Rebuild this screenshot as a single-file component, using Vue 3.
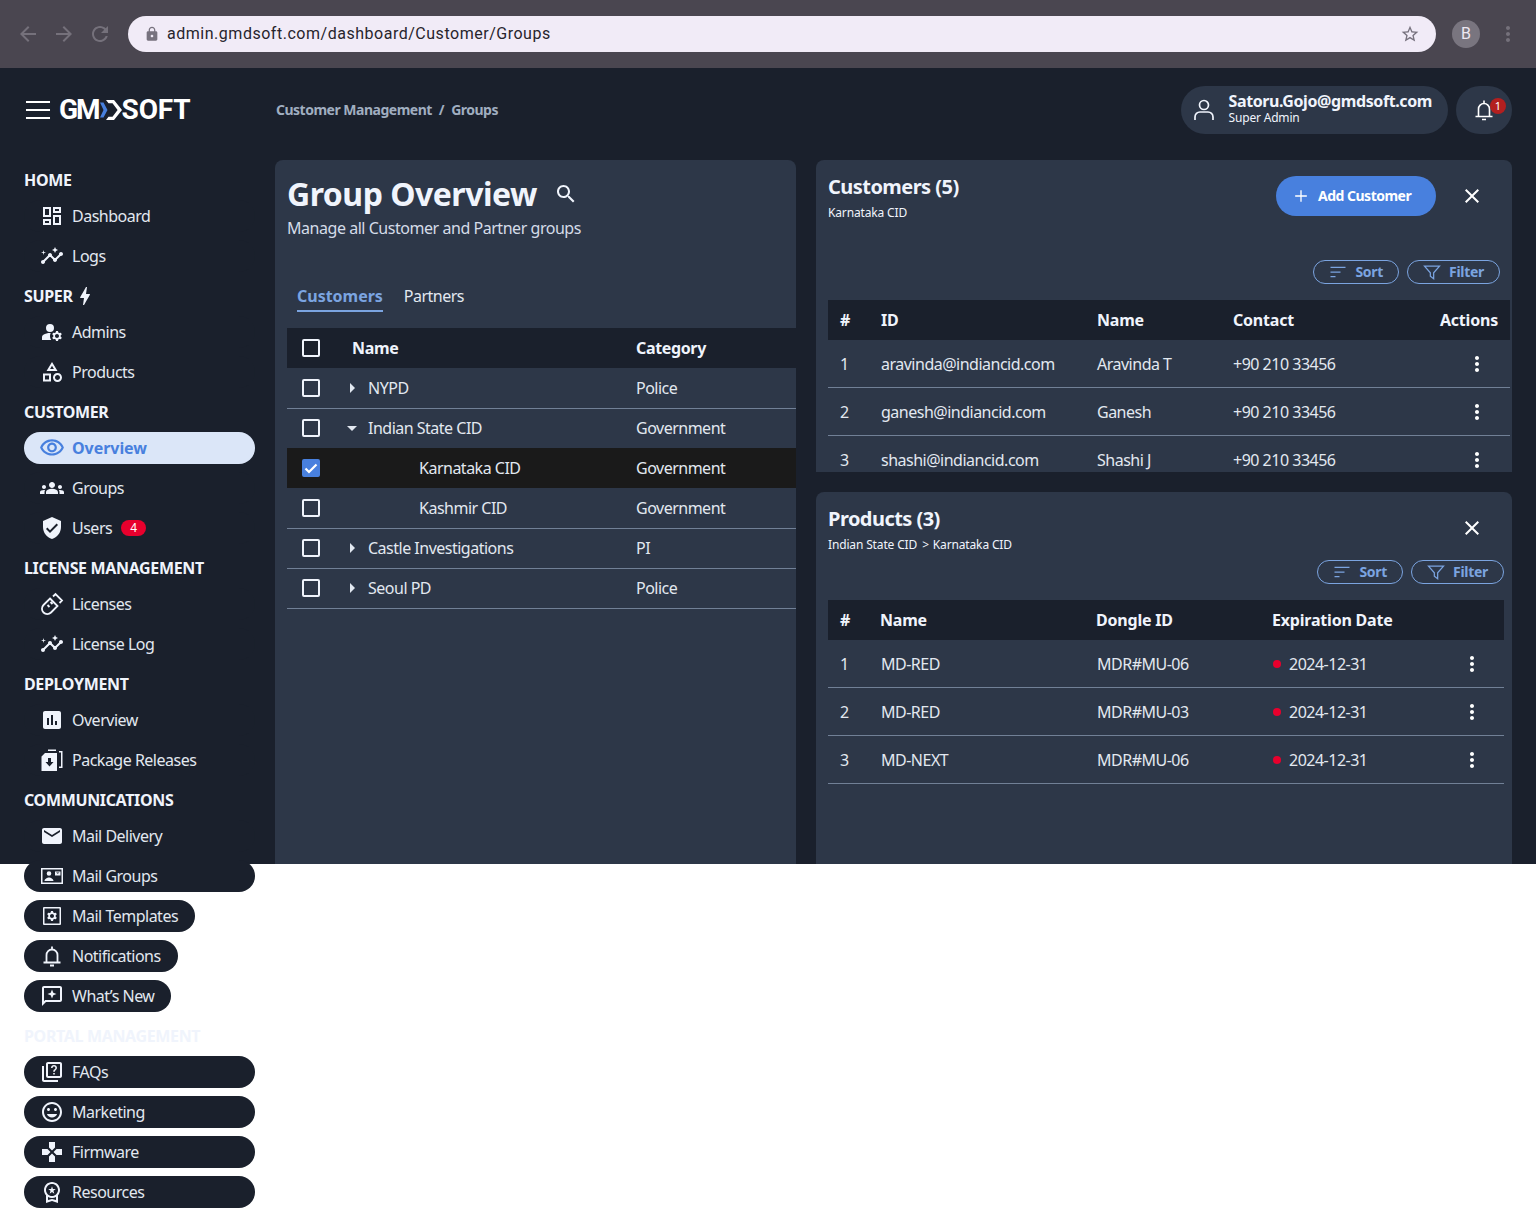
<script setup>
import { h } from 'vue'

const icons = {
  back: 'M20 11H7.83l5.59-5.59L12 4l-8 8 8 8 1.41-1.41L7.83 13H20v-2z',
  forward: 'M12 4l-1.41 1.41L16.17 11H4v2h12.17l-5.58 5.59L12 20l8-8z',
  reload: 'M17.65 6.35C16.2 4.9 14.21 4 12 4c-4.42 0-7.99 3.58-7.99 8s3.57 8 7.99 8c3.73 0 6.84-2.55 7.73-6h-2.08c-.82 2.33-3.04 4-5.65 4-3.31 0-6-2.69-6-6s2.69-6 6-6c1.66 0 3.14.69 4.22 1.78L13 11h7V4l-2.35 2.35z',
  lock: 'M18 8h-1V6c0-2.76-2.24-5-5-5S7 3.24 7 6v2H6c-1.1 0-2 .9-2 2v10c0 1.1.9 2 2 2h12c1.1 0 2-.9 2-2V10c0-1.1-.9-2-2-2zm-6 9c-1.1 0-2-.9-2-2s.9-2 2-2 2 .9 2 2-.9 2-2 2zm3.1-9H8.9V6c0-1.71 1.39-3.1 3.1-3.1 1.71 0 3.1 1.39 3.1 3.1v2z',
  star: 'M22 9.24l-7.19-.62L12 2 9.19 8.63 2 9.24l5.46 4.73L5.82 21 12 17.27 18.18 21l-1.63-7.03L22 9.24zM12 15.4l-3.76 2.27 1-4.28-3.32-2.88 4.38-.38L12 6.1l1.71 4.04 4.38.38-3.32 2.88 1 4.28L12 15.4z',
  dashboard: 'M19 5v2h-4V5h4M9 5v6H5V5h4m10 8v6h-4v-6h4M9 17v2H5v-2h4M21 3h-8v6h8V3zM11 3H3v10h8V3zm10 8h-8v10h8V11zm-10 4H3v6h8v-6z',
  insights: 'M21 8c-1.45 0-2.26 1.44-1.93 2.51l-3.55 3.56c-.3-.09-.74-.09-1.04 0l-2.55-2.55C12.27 10.45 11.46 9 10 9c-1.45 0-2.27 1.44-1.93 2.52l-4.56 4.55C2.44 15.74 1 16.55 1 18c0 1.1.9 2 2 2 1.45 0 2.26-1.44 1.93-2.51l4.55-4.56c.3.09.74.09 1.04 0l2.55 2.55C12.73 16.55 13.54 18 15 18c1.45 0 2.27-1.44 1.93-2.52l3.56-3.55c1.07.33 2.51-.48 2.51-1.93 0-1.1-.9-2-2-2zM15 9l.94-2.07L18 6l-2.06-.93L15 3l-.92 2.07L12 6l2.08.93zM3.5 11L4 9l2-.5L4 8l-.5-2L3 8l-2 .5L3 9z',
  admins: 'M10 4a4 4 0 1 0 0 8 4 4 0 0 0 0-8zM10.67 13.02C10.45 13.01 10.23 13 10 13c-2.42 0-4.68.67-6.61 1.82-.88.52-1.39 1.5-1.39 2.53V20h9.26c-.79-1.13-1.26-2.51-1.26-4 0-1.07.25-2.07.67-2.98zM20.75 16c0-.22-.03-.42-.06-.63l1.14-1.01-1-1.73-1.45.49c-.32-.27-.68-.48-1.08-.63L18 11h-2l-.3 1.49c-.4.15-.76.36-1.08.63l-1.45-.49-1 1.73 1.14 1.01c-.03.21-.06.41-.06.63s.03.42.06.63l-1.14 1.01 1 1.73 1.45-.49c.32.27.68.48 1.08.63L16 21h2l.3-1.49c.4-.15.76-.36 1.08-.63l1.45.49 1-1.73-1.14-1.01c.03-.21.06-.41.06-.63zM17 18c-1.1 0-2-.9-2-2s.9-2 2-2 2 .9 2 2-.9 2-2 2z',
  category: 'M12 2l-5.5 9h11L12 2zm0 3.84L13.93 9h-3.87L12 5.84zM17.5 13c-2.49 0-4.5 2.01-4.5 4.5s2.01 4.5 4.5 4.5 4.5-2.01 4.5-4.5-2.01-4.5-4.5-4.5zm0 7c-1.38 0-2.5-1.12-2.5-2.5s1.12-2.5 2.5-2.5 2.5 1.12 2.5 2.5-1.12 2.5-2.5 2.5zM3 21.5h8v-8H3v8zm2-6h4v4H5v-4z',
  eye: 'M12 6c3.79 0 7.17 2.13 8.82 5.5C19.17 14.87 15.79 17 12 17s-7.17-2.13-8.82-5.5C4.83 8.13 8.21 6 12 6m0-2C7 4 2.73 7.11 1 11.5 2.73 15.89 7 19 12 19s9.27-3.11 11-7.5C21.27 7.11 17 4 12 4zm0 5c1.38 0 2.5 1.12 2.5 2.5S13.38 14 12 14s-2.5-1.12-2.5-2.5S10.62 9 12 9m0-2c-2.48 0-4.5 2.02-4.5 4.5S9.52 16 12 16s4.5-2.02 4.5-4.5S14.48 7 12 7z',
  groups: 'M12 12.75c1.63 0 3.07.39 4.24.9 1.08.48 1.76 1.56 1.76 2.73V18H6v-1.61c0-1.18.68-2.26 1.76-2.73 1.17-.52 2.61-.91 4.24-.91zM4 13c1.1 0 2-.9 2-2s-.9-2-2-2-2 .9-2 2 .9 2 2 2zm1.13 1.1c-.37-.06-.74-.1-1.13-.1-.99 0-1.93.21-2.78.58C.48 14.9 0 15.62 0 16.43V18h4.5v-1.61c0-.83.23-1.61.63-2.29zM20 13c1.1 0 2-.9 2-2s-.9-2-2-2-2 .9-2 2 .9 2 2 2zm4 3.43c0-.81-.48-1.53-1.22-1.85-.85-.37-1.79-.58-2.78-.58-.39 0-.76.04-1.13.1.4.68.63 1.46.63 2.29V18H24v-1.57zM12 6c1.66 0 3 1.34 3 3s-1.34 3-3 3-3-1.34-3-3 1.34-3 3-3z',
  shield: 'M12 1L3 5v6c0 5.55 3.84 10.74 9 12 5.16-1.26 9-6.45 9-12V5l-9-4zm-2 16l-4-4 1.41-1.41L10 14.17l6.59-6.59L18 9l-8 8z',
  poll: 'M19 3H5c-1.1 0-2 .9-2 2v14c0 1.1.9 2 2 2h14c1.1 0 2-.9 2-2V5c0-1.1-.9-2-2-2zM9 17H7v-7h2v7zm4 0h-2V7h2v10zm4 0h-2v-4h2v4z',
  packageFile: 'M1.500 8.500l3.500-3.500h12v18H1.500zM8 10v4H5.500l4 4.500 4-4.500H11v-4zM19 3h3.500v17H19v-1.500h2V4.500h-2zM8 1.500h8V3H8z',
  email: 'M20 4H4c-1.1 0-1.99.9-1.99 2L2 18c0 1.1.9 2 2 2h16c1.1 0 2-.9 2-2V6c0-1.1-.9-2-2-2zm0 4l-8 5-8-5V6l8 5 8-5v2z',
  mailGroup: 'M1 4h22v16H1zM2.500 5.500v13h19v-13zM9 7.200a2.300 2.300 0 1 1 0 4.600 2.300 2.300 0 0 1 0-4.600zM4.500 17c0-2.200 3-3.500 4.500-3.500s4.500 1.300 4.500 3.500zM15 7.500h5.500v4H15zM16 8.500l1.700 1.200 1.800-1.200z',
  mailTemplate: 'M4 3h16a1 1 0 0 1 1 1v16a1 1 0 0 1-1 1H4a1 1 0 0 1-1-1V4a1 1 0 0 1 1-1zM4.500 4.500v15h15v-15zM15.750 12c0-.22-.03-.42-.06-.63l1.140-1.010-1-1.730-1.450.49c-.32-.27-.68-.48-1.080-.63L13 7h-2l-.3 1.490c-.4.15-.76.36-1.080.63l-1.450-.49-1 1.730 1.140 1.010c-.03.21-.06.41-.06.63s.03.42.06.63l-1.140 1.010 1 1.730 1.450-.49c.32.27.68.48 1.080.63L11 17h2l.3-1.490c.4-.15.76-.36 1.080-.63l1.450.49 1-1.730-1.140-1.010c.03-.21.06-.41.06-.63zM12 14c-1.100 0-2-.9-2-2s.9-2 2-2 2 .9 2 2-.9 2-2 2z',
  whatsNew: 'M20 2H4c-1.1 0-2 .9-2 2v18l4-4h14c1.1 0 2-.9 2-2V4c0-1.1-.9-2-2-2zm0 14H5.170L4 17.170V4h16v12zM12 5.500l1.300 3.200 3.200 1.300-3.200 1.300-1.300 3.200-1.300-3.200L7.500 10l3.200-1.300z',
  quiz: 'M4 6H2v14c0 1.1.9 2 2 2h14v-2H4V6zm16-4H8c-1.1 0-2 .9-2 2v12c0 1.1.9 2 2 2h12c1.1 0 2-.9 2-2V4c0-1.1-.9-2-2-2zm0 14H8V4h12v12zM13.200 13h1.600v1.600h-1.600zM14 5c-1.700 0-3 1.300-3 3h1.600c0-.8.6-1.400 1.400-1.400s1.400.6 1.400 1.400c0 1.400-2.200 1.300-2.200 3.700h1.600c0-1.700 2.200-1.900 2.200-3.700 0-1.700-1.300-3-3-3z',
  mood: 'M11.99 2C6.47 2 2 6.48 2 12s4.47 10 9.99 10C17.52 22 22 17.52 22 12S17.52 2 11.99 2zM12 20c-4.42 0-8-3.58-8-8s3.58-8 8-8 8 3.58 8 8-3.58 8-8 8zm3.5-9c.83 0 1.5-.67 1.5-1.5S16.33 8 15.5 8 14 8.67 14 9.5s.67 1.5 1.5 1.5zm-7 0c.83 0 1.5-.67 1.5-1.5S9.33 8 8.5 8 7 8.67 7 9.5 7.67 11 8.5 11zm3.5 6.5c2.33 0 4.31-1.46 5.11-3.5H6.89c.8 2.04 2.78 3.5 5.11 3.5z',
  games: 'M15 7.5V2H9v5.5l3 3 3-3zM7.5 9H2v6h5.5l3-3-3-3zM9 16.5V22h6v-5.5l-3-3-3 3zM16.5 9l-3 3 3 3H22V9h-5.5z',
  premium: 'M9.68 13.69L12 11.93l2.31 1.76-.88-2.85L15.75 9h-2.84L12 6.19 11.09 9H8.25l2.31 1.84-.88 2.85zM20 10c0-4.42-3.58-8-8-8s-8 3.58-8 8c0 2.03.76 3.87 2 5.28V23l6-2 6 2v-7.72c1.24-1.41 2-3.25 2-5.28zm-8-6c3.31 0 6 2.69 6 6s-2.69 6-6 6-6-2.69-6-6 2.69-6 6-6zm0 15l-4 1.02v-3.1c1.18.68 2.54 1.08 4 1.08s2.82-.4 4-1.08v3.1L12 19z',
  bolt: 'M11 21h-1l1-7H7.5c-.58 0-.57-.32-.38-.66.19-.34.05-.08.07-.12C8.48 10.94 10.42 7.54 13 3h1l-1 7h3.5c.49 0 .56.33.47.51l-.07.15C12.96 17.55 11 21 11 21z',
  search: 'M15.5 14h-.79l-.28-.27C15.41 12.59 16 11.11 16 9.5 16 5.91 13.09 3 9.5 3S3 5.91 3 9.5 5.91 16 9.5 16c1.61 0 3.09-.59 4.23-1.57l.27.28v.79l5 4.99L20.49 19l-4.99-5zm-6 0C7.01 14 5 11.99 5 9.5S7.01 5 9.5 5 14 7.01 14 9.5 11.99 14 9.5 14z',
  close: 'M19 6.41L17.59 5 12 10.59 6.41 5 5 6.41 10.59 12 5 17.59 6.41 19 12 13.41 17.59 19 19 17.59 13.41 12z',
  kebab: 'M12 8c1.1 0 2-.9 2-2s-.9-2-2-2-2 .9-2 2 .9 2 2 2zm0 2c-1.1 0-2 .9-2 2s.9 2 2 2 2-.9 2-2-.9-2-2-2zm0 6c-1.1 0-2 .9-2 2s.9 2 2 2 2-.9 2-2-.9-2-2-2z',
  caretRight: 'M10 17l5-5-5-5v10z',
  caretDown: 'M7 10l5 5 5-5H7z',
  menu: 'M1.700 4.300h20.600V6H1.700zM1.700 11.150h20.600v1.700H1.700zM1.700 18h20.600v1.700H1.700z',
  plus: 'M11.2 5h1.6v6.2H19v1.6h-6.2V19h-1.6v-6.2H5v-1.6h6.2z',
}

// outlined icons that read better as strokes than as filled shapes
const strokeIcons = {
  license: 'M10 6.5l7.5 7.5-6.5 6.5A5.3 5.3 0 0 1 3.5 13zM13 4.5L15.500 2 22 8.500 19.500 11M7.500 13l2 2M10.500 10l2 2',
  person: 'M12 2.500a4.500 4.500 0 1 0 0 9 4.500 4.500 0 0 0 0-9zM3 22v-3a5 5 0 0 1 5-5h8a5 5 0 0 1 5 5v3',
  bell: 'M6.500 18v-7a5.500 5.500 0 0 1 11 0v7M3.500 18.500h17M12 2.500v3M10 21.500h4',
  sort: 'M3 6.5h18M3 12h12M3 17.5h6',
  filter: 'M3 5h18l-7 8v7l-4-3v-4z',
}

const Icon = (props) => {
  const stroke = strokeIcons[props.name]
  return h('svg', { viewBox: '0 0 24 24', width: props.size || 24, height: props.size || 24, class: 'icon' }, [
    stroke
      ? h('path', { d: stroke, fill: 'none', stroke: 'currentColor', 'stroke-width': props.weight || 1.8 })
      : h('path', { d: icons[props.name], fill: 'currentColor', 'fill-rule': 'evenodd' }),
  ])
}
Icon.props = ['name', 'size', 'weight']

const nav = [
  { title: 'Home', items: [
    { label: 'Dashboard', icon: 'dashboard' },
    { label: 'Logs', icon: 'insights' },
  ] },
  { title: 'Super', bolt: true, items: [
    { label: 'Admins', icon: 'admins' },
    { label: 'Products', icon: 'category' },
  ] },
  { title: 'Customer', items: [
    { label: 'Overview', icon: 'eye', active: true },
    { label: 'Groups', icon: 'groups' },
    { label: 'Users', icon: 'shield', badge: 4 },
  ] },
  { title: 'License Management', items: [
    { label: 'Licenses', icon: 'license' },
    { label: 'License Log', icon: 'insights' },
  ] },
  { title: 'Deployment', items: [
    { label: 'Overview', icon: 'poll' },
    { label: 'Package Releases', icon: 'packageFile' },
  ] },
  { title: 'Communications', items: [
    { label: 'Mail Delivery', icon: 'email' },
    { label: 'Mail Groups', icon: 'mailGroup' },
    { label: 'Mail Templates', icon: 'mailTemplate', fit: true },
    { label: 'Notifications', icon: 'bell', fit: true },
    { label: 'What’s New', icon: 'whatsNew', fit: true },
  ] },
  { title: 'Portal Management', items: [
    { label: 'FAQs', icon: 'quiz' },
    { label: 'Marketing', icon: 'mood' },
    { label: 'Firmware', icon: 'games' },
    { label: 'Resources', icon: 'premium' },
  ] },
]

const groups = [
  { name: 'NYPD', category: 'Police', caret: 'caretRight', line: true },
  { name: 'Indian State CID', category: 'Government', caret: 'caretDown' },
  { name: 'Karnataka CID', category: 'Government', child: true, checked: true },
  { name: 'Kashmir CID', category: 'Government', child: true, line: true },
  { name: 'Castle Investigations', category: 'PI', caret: 'caretRight', line: true },
  { name: 'Seoul PD', category: 'Police', caret: 'caretRight', line: true },
]

const customers = [
  { id: 'aravinda@indiancid.com', name: 'Aravinda T', contact: '+90 210 33456' },
  { id: 'ganesh@indiancid.com', name: 'Ganesh', contact: '+90 210 33456' },
  { id: 'shashi@indiancid.com', name: 'Shashi J', contact: '+90 210 33456' },
]

const products = [
  { name: 'MD-RED', dongle: 'MDR#MU-06', date: '2024-12-31' },
  { name: 'MD-RED', dongle: 'MDR#MU-03', date: '2024-12-31' },
  { name: 'MD-NEXT', dongle: 'MDR#MU-06', date: '2024-12-31' },
]
</script>

<template>
  <div class="page">
    <div class="chrome">
      <div class="chrome__nav">
        <Icon name="back" />
        <Icon name="forward" />
        <Icon name="reload" />
      </div>
      <div class="omnibox">
        <Icon name="lock" :size="16" class="omnibox__lock" />
        <span class="omnibox__url">admin.gmdsoft.com/dashboard/Customer/Groups</span>
        <Icon name="star" :size="20" class="omnibox__star" />
      </div>
      <span class="avatar">B</span>
      <Icon name="kebab" class="chrome__more" />
    </div>

    <div class="app">
      <header class="topbar">
        <div class="brand">
          <Icon name="menu" :size="28" class="brand__menu" />
          <span class="brand__text brand__text--gm">GM</span>
          <svg class="brand__mark" viewBox="0 0 22 20" width="22" height="20">
            <path d="M0 2.500h3.500l4 7.500-4 7.500H0l3.500-7.500z" fill="#4880de" />
            <path d="M6 0h8l8 10-8 10H6l2.500-3.200h4L17.600 10l-5.100-6.800h-4z" fill="#fff" />
          </svg>
          <span class="brand__text">SOFT</span>
        </div>
        <div class="crumbs">
          <span>Customer Management</span>
          <span>/</span>
          <span>Groups</span>
        </div>
        <div class="account">
          <Icon name="person" :size="24" :weight="1.7" />
          <div class="account__text">
            <strong>Satoru.Gojo@gmdsoft.com</strong>
            <span>Super Admin</span>
          </div>
        </div>
        <div class="alerts">
          <Icon name="bell" :weight="1.6" />
          <span class="alerts__badge">1</span>
        </div>
      </header>

      <div class="workspace">
        <aside class="sidebar">
          <section v-for="section in nav" :key="section.title" class="nav-section">
            <h3 class="nav-section__title">
              {{ section.title }}
              <Icon v-if="section.bolt" name="bolt" class="nav-section__bolt" />
            </h3>
            <a
              v-for="item in section.items"
              :key="item.label"
              class="nav-item"
              :class="{ 'nav-item--active': item.active, 'nav-item--fit': item.fit }"
            >
              <Icon :name="item.icon" :size="item.active ? 26 : 24" />
              <span>{{ item.label }}</span>
              <span v-if="item.badge" class="nav-item__badge">{{ item.badge }}</span>
            </a>
          </section>
        </aside>

        <section class="panel panel--groups">
          <div class="groups-title">
            <h1>Group Overview</h1>
            <Icon name="search" />
          </div>
          <p class="groups-sub">Manage all Customer and Partner groups</p>

          <div class="tabs">
            <span class="tab tab--active">Customers</span>
            <span class="tab">Partners</span>
          </div>

          <div class="tree-row tree-row--head">
            <span class="check" />
            <span>Name</span>
            <span>Category</span>
          </div>
          <div
            v-for="group in groups"
            :key="group.name"
            class="tree-row"
            :class="{ 'tree-row--selected': group.checked, 'tree-row--line': group.line }"
          >
            <span class="check" :class="{ 'check--on': group.checked }">
              <svg v-if="group.checked" viewBox="0 0 18 18" width="18" height="18">
                <path d="M3.500 9.500l3.500 3.500 7.500-7.500" fill="none" stroke="#fff" stroke-width="2.200" />
              </svg>
            </span>
            <span class="tree-name" :class="{ 'tree-name--child': group.child }">
              <Icon v-if="group.caret" :name="group.caret" class="tree-caret" />
              {{ group.name }}
            </span>
            <span>{{ group.category }}</span>
          </div>
        </section>

        <div class="details">
          <section class="panel panel--customers">
            <div class="panel-head">
              <div>
                <h2>Customers (5)</h2>
                <p>Karnataka CID</p>
              </div>
              <div class="panel-head__actions">
                <button class="add-btn">
                  <Icon name="plus" :size="20" />
                  Add Customer
                </button>
                <Icon name="close" class="panel-head__close" />
              </div>
            </div>
            <div class="toolbar">
              <button class="pill-btn"><Icon name="sort" :size="20" :weight="1.5" />Sort</button>
              <button class="pill-btn"><Icon name="filter" :size="20" :weight="1.5" />Filter</button>
            </div>
            <div class="data-row data-row--customers data-row--head">
              <span>#</span><span>ID</span><span>Name</span><span>Contact</span><span class="actions-head">Actions</span>
            </div>
            <div v-for="(row, i) in customers" :key="row.id" class="data-row data-row--customers">
              <span>{{ i + 1 }}</span>
              <span>{{ row.id }}</span>
              <span>{{ row.name }}</span>
              <span>{{ row.contact }}</span>
              <Icon name="kebab" class="row-more" />
            </div>
          </section>

          <section class="panel panel--products">
            <div class="panel-head">
              <div>
                <h2>Products (3)</h2>
                <p>Indian State CID<span class="path-sep">&gt;</span>Karnataka CID</p>
              </div>
              <div class="panel-head__actions">
                <Icon name="close" class="panel-head__close" />
              </div>
            </div>
            <div class="toolbar">
              <button class="pill-btn"><Icon name="sort" :size="20" :weight="1.5" />Sort</button>
              <button class="pill-btn"><Icon name="filter" :size="20" :weight="1.5" />Filter</button>
            </div>
            <div class="data-row data-row--products data-row--head">
              <span>#</span><span>Name</span><span>Dongle ID</span><span>Expiration Date</span><span />
            </div>
            <div v-for="(row, i) in products" :key="i" class="data-row data-row--products">
              <span>{{ i + 1 }}</span>
              <span>{{ row.name }}</span>
              <span>{{ row.dongle }}</span>
              <span class="expiry"><i class="expiry__dot" />{{ row.date }}</span>
              <Icon name="kebab" class="row-more" />
            </div>
          </section>
        </div>
      </div>
    </div>
  </div>
</template>

<style scoped>
.page {
  min-height: 1208px;
  font-family: "Noto Sans", sans-serif;
  font-size: 16px;
  line-height: 24px;
  letter-spacing: -0.5px;
  color: #e2e8f0;
}

.icon {
  display: block;
  flex: none;
}

/* browser bar */
.chrome {
  display: flex;
  align-items: center;
  height: 68px;
  padding: 0 16px;
  box-sizing: border-box;
  background: #4a4650;
  color: #75717b;
}

.chrome__nav {
  display: flex;
  gap: 12px;
  width: 112px;
}

.omnibox {
  display: flex;
  align-items: center;
  width: 1308px;
  height: 36px;
  padding: 0 16px;
  box-sizing: border-box;
  border-radius: 18px;
  background: #f1ebf7;
  color: #77727e;
}

.omnibox__url {
  margin-left: 7px;
  font-family: Roboto, sans-serif;
  font-size: 16px;
  letter-spacing: 0.52px;
  color: #27242c;
}

.omnibox__star {
  margin-left: auto;
}

.avatar {
  display: flex;
  align-items: center;
  justify-content: center;
  width: 28px;
  height: 28px;
  margin-left: 16px;
  border-radius: 50%;
  background: #79757f;
  color: #ece7f1;
  font-family: Roboto, sans-serif;
  letter-spacing: 0;
}

.chrome__more {
  margin-left: 16px;
}

/* app frame */
.app {
  height: 796px;
  background: #1a202c;
}

.topbar {
  display: flex;
  align-items: center;
  height: 92px;
  padding: 0 24px 8px;
  box-sizing: border-box;
}

.brand {
  display: flex;
  align-items: center;
  width: 252px;
  color: #fff;
}

.brand__menu {
  margin-right: 8px;
}

.brand__text {
  font-family: Roboto, sans-serif;
  font-size: 28px;
  font-weight: 700;
  line-height: 28px;
  letter-spacing: -0.2px;
}

.brand__text--gm {
  margin-left: -1px;
  letter-spacing: -2px;
}

.brand__mark {
  margin-left: 1px;
}

.crumbs {
  display: flex;
  gap: 7px;
  color: #a0aec0;
  font-size: 14px;
  font-weight: 700;
  letter-spacing: -0.5px;
}

.account {
  display: flex;
  align-items: center;
  gap: 13px;
  height: 48px;
  margin-left: auto;
  padding: 0 16px 0 11px;
  box-sizing: border-box;
  border-radius: 24px;
  background: #2d3748;
  color: #f0f4fc;
}

.account__text {
  display: flex;
  flex-direction: column;
  margin-bottom: 3px;
}

.account__text strong {
  font-size: 16px;
  font-weight: 700;
  line-height: 17px;
  letter-spacing: -0.4px;
}

.account__text span {
  font-size: 12px;
  line-height: 15px;
  letter-spacing: -0.18px;
}

.alerts {
  position: relative;
  display: flex;
  align-items: center;
  justify-content: center;
  width: 56px;
  height: 48px;
  margin-left: 8px;
  border-radius: 24px;
  background: #2d3748;
  color: #fff;
}

.alerts__badge {
  position: absolute;
  top: 12px;
  left: 34px;
  width: 16px;
  height: 16px;
  border-radius: 50%;
  background: #b31f1f;
  color: #fff;
  font-size: 11px;
  line-height: 16px;
  letter-spacing: 0;
  text-align: center;
}

.workspace {
  display: flex;
  height: 704px;
}

/* sidebar, spills below the frame like the real page does */
.sidebar {
  display: flex;
  flex: none;
  flex-direction: column;
  gap: 12px;
  width: 275px;
  padding: 8px 20px 0 24px;
  box-sizing: border-box;
}

.nav-section {
  display: flex;
  flex: none;
  flex-direction: column;
  gap: 8px;
}

.nav-section__title {
  display: flex;
  align-items: center;
  margin: 0;
  color: #f0f4fc;
  font-size: 16px;
  font-weight: 700;
  line-height: 24px;
  letter-spacing: -0.35px;
  text-transform: uppercase;
}

.nav-item {
  display: flex;
  align-items: center;
  gap: 8px;
  height: 32px;
  padding: 0 17px 0 16px;
  box-sizing: border-box;
  border-radius: 16px;
  background: #1a202c;
  color: #e2e8f0;
}

.nav-item .icon {
  color: #f0f4fc;
}

.nav-item--fit {
  align-self: flex-start;
}

.nav-item--active {
  gap: 7px;
  padding-left: 15px;
  background: #dbe6f8;
  color: #4880de;
  font-weight: 700;
  letter-spacing: -0.05px;
}

.nav-item--active .icon {
  color: #4880de;
}

.nav-item__badge {
  width: 25px;
  height: 16px;
  margin-left: 1px;
  border-radius: 8px;
  background: #e8002d;
  color: #fff;
  font-size: 12px;
  line-height: 16px;
  letter-spacing: 0;
  text-align: center;
}

/* panels */
.panel {
  overflow: hidden;
  box-sizing: border-box;
  border-radius: 8px 8px 0 0;
  background: #2d3748;
}

.panel--groups {
  flex: none;
  width: 521px;
  padding: 12px 0 0 12px;
}

.groups-title {
  display: flex;
  align-items: center;
  gap: 17px;
  color: #f0f4fc;
}

.groups-title h1 {
  margin: 0;
  font-size: 32px;
  font-weight: 700;
  line-height: 44px;
  letter-spacing: -0.5px;
}

.groups-sub {
  margin: 0;
  color: #d5dce8;
  letter-spacing: -0.46px;
}

.tabs {
  display: flex;
  gap: 21px;
  margin: 44px 0 16px;
  padding-left: 10px;
}

.tab {
  height: 26px;
  color: #e2e8f0;
}

.tab--active {
  border-bottom: 2px solid #7ba4e0;
  color: #7ba4e0;
  font-weight: 700;
  letter-spacing: -0.02px;
}

.tree-row {
  display: grid;
  grid-template-columns: 65px 284px 1fr;
  align-items: center;
  height: 40px;
  box-sizing: border-box;
}

.tree-row--head {
  background: #1a202c;
  color: #f0f4fc;
  font-weight: 700;
  letter-spacing: -0.35px;
}

.tree-row--selected {
  background: #1a1a1a;
}

.tree-row--line {
  height: 41px;
  margin-bottom: -1px;
  border-bottom: 1px solid #718096;
}

.check {
  display: block;
  width: 18px;
  height: 18px;
  margin-left: 15px;
  box-sizing: border-box;
  border: 2px solid #f0f4fc;
  border-radius: 2px;
}

.check svg {
  display: block;
  margin: -2px;
}

.check--on {
  border-color: #4880de;
  background: #4880de;
}

.tree-name {
  position: relative;
  display: flex;
  align-items: center;
  padding-left: 16px;
}

.tree-name--child {
  padding-left: 67px;
}

.tree-caret {
  position: absolute;
  left: -12px;
}

.details {
  display: flex;
  flex: none;
  flex-direction: column;
  gap: 20px;
  width: 696px;
  margin-left: 20px;
}

.panel--customers {
  height: 312px;
  flex: none;
  padding: 13px 12px 0;
}

.panel--products {
  height: 372px;
  flex: none;
  padding: 13px 8px 0 12px;
}

.panel-head {
  display: flex;
  justify-content: space-between;
  padding-right: 16px;
}

.panel--products .panel-head {
  padding-right: 20px;
}

.panel-head h2 {
  margin: 0;
  color: #f0f4fc;
  font-size: 20px;
  font-weight: 700;
  line-height: 28px;
  letter-spacing: -0.54px;
}

.panel-head p {
  margin: 4px 0 0;
  color: #f0f4fc;
  font-size: 12px;
  line-height: 16px;
  letter-spacing: -0.15px;
}

.path-sep {
  margin: 0 4px 0 5px;
}

.panel-head__actions {
  display: flex;
  align-items: flex-start;
  gap: 24px;
  margin-top: 3px;
  color: #fff;
}

.panel-head__close {
  margin-top: 8px;
}

.add-btn {
  display: flex;
  align-items: center;
  gap: 7px;
  width: 160px;
  height: 40px;
  padding: 0 0 1px 15px;
  border: 0;
  border-radius: 20px;
  background: #4880de;
  color: #fff;
  font-family: inherit;
  font-size: 14px;
  font-weight: 700;
  letter-spacing: -0.5px;
}

.add-btn .icon {
  margin-top: 1px;
}

.toolbar {
  display: flex;
  justify-content: flex-end;
  gap: 8px;
  margin: 39px 0 16px;
}

.panel--products .toolbar {
  margin-top: 7px;
}

.pill-btn {
  display: flex;
  align-items: center;
  gap: 7px;
  height: 24px;
  padding: 0 15px 1px 14px;
  border: 1px solid #7ba4e0;
  border-radius: 12px;
  background: none;
  color: #7ba4e0;
  font-family: inherit;
  font-size: 14px;
  font-weight: 700;
  letter-spacing: -0.3px;
}

.data-row {
  display: grid;
  align-items: center;
  height: 48px;
  padding: 0 12px;
  box-sizing: border-box;
  border-bottom: 1px solid #718096;
}

.data-row--customers {
  grid-template-columns: 41px 216px 136px 1fr 60px;
  margin-right: -10px;
}

.data-row--products {
  grid-template-columns: 41px 216px 176px 1fr 32px;
}

.data-row--head {
  height: 40px;
  border-bottom: 0;
  background: #1a202c;
  color: #f0f4fc;
  font-weight: 700;
  letter-spacing: -0.2px;
}

.data-row--products.data-row--head span + span {
  margin-left: -1px;
}

.actions-head {
  justify-self: end;
}

.row-more {
  justify-self: start;
  margin-left: 27px;
  color: #fff;
}

.data-row--products .row-more {
  margin-left: 0;
}

.expiry {
  display: flex;
  align-items: center;
}

.expiry__dot {
  width: 8px;
  height: 8px;
  margin-right: 8px;
  border-radius: 50%;
  background: #e8002d;
}
</style>

<style>
html,
body {
  margin: 0;
  background: #fff;
}
</style>
